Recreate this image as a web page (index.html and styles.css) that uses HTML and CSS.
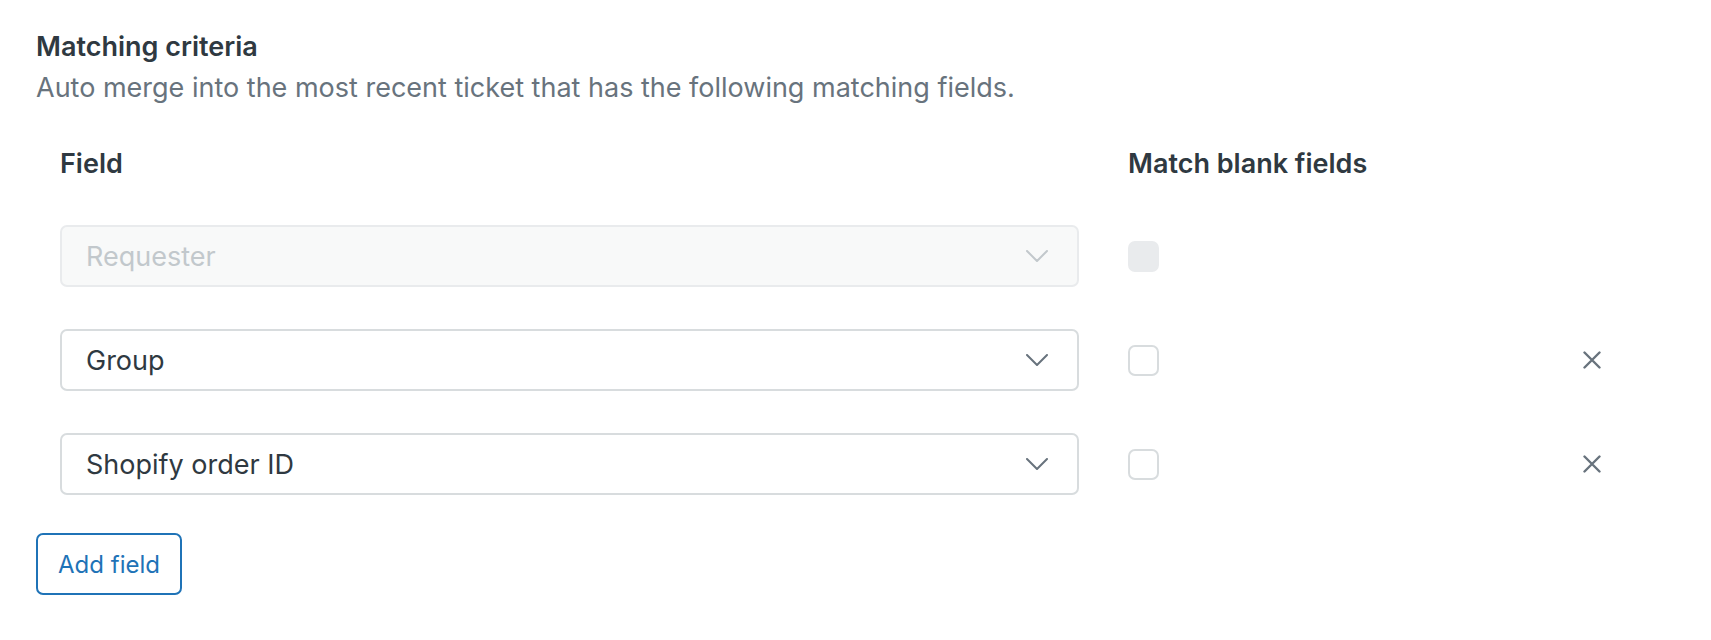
FILE: index.html
```html
<!DOCTYPE html>
<html lang="en">
<head>
<meta charset="utf-8">
<title>Matching criteria</title>
<link rel="stylesheet" href="styles.css">
</head>
<body>
<section class="criteria">
  <h2 class="criteria__title">Matching criteria</h2>
  <p class="criteria__hint">Auto merge into the most recent ticket that has the following matching fields.</p>

  <div class="grid">
    <div class="grid__head">Field</div>
    <div class="grid__head">Match blank fields</div>
    <div class="grid__head"></div>

    <div class="select select--disabled">
      <span class="select__value">Requester</span>
      <svg class="select__chevron" viewBox="0 0 22 12" width="22" height="12"><path d="M1 1l10 10L21 1" fill="none" stroke="currentColor" stroke-width="2" stroke-linecap="round" stroke-linejoin="round"/></svg>
    </div>
    <div class="cell"><span class="checkbox checkbox--disabled"></span></div>
    <div class="cell"></div>

    <div class="select">
      <span class="select__value">Group</span>
      <svg class="select__chevron" viewBox="0 0 22 12" width="22" height="12"><path d="M1 1l10 10L21 1" fill="none" stroke="currentColor" stroke-width="2" stroke-linecap="round" stroke-linejoin="round"/></svg>
    </div>
    <div class="cell"><span class="checkbox"></span></div>
    <div class="cell cell--center"><svg class="remove" viewBox="0 0 18 18" width="18" height="18"><path d="M1.5 1.5l15 15M16.5 1.5l-15 15" fill="none" stroke="currentColor" stroke-width="2.4" stroke-linecap="round"/></svg></div>

    <div class="select">
      <span class="select__value">Shopify order ID</span>
      <svg class="select__chevron" viewBox="0 0 22 12" width="22" height="12"><path d="M1 1l10 10L21 1" fill="none" stroke="currentColor" stroke-width="2" stroke-linecap="round" stroke-linejoin="round"/></svg>
    </div>
    <div class="cell"><span class="checkbox"></span></div>
    <div class="cell cell--center"><svg class="remove" viewBox="0 0 18 18" width="18" height="18"><path d="M1.5 1.5l15 15M16.5 1.5l-15 15" fill="none" stroke="currentColor" stroke-width="2.4" stroke-linecap="round"/></svg></div>
  </div>

  <button class="btn" type="button">Add field</button>
</section>
</body>
</html>
```

FILE: styles.css
```css
html, body {
  margin: 0;
  padding: 0;
  background: #ffffff;
}

body {
  font-family: Inter, "Noto Sans", "Liberation Sans", sans-serif;
  color: #2f3941;
}

.criteria {
  padding: 29px 0 0 36px;
}

.criteria__title {
  margin: 0;
  font-size: 27px;
  line-height: 36px;
  font-weight: 600;
  color: #2f3941;
}

.criteria__hint {
  margin: 5px 0 0;
  font-size: 27px;
  line-height: 36px;
  font-weight: 400;
  color: #68737d;
}

.grid {
  margin: 40px 0 0 24px;
  width: 1550px;
  display: grid;
  grid-template-columns: 1019px 1fr 36px;
  column-gap: 49px;
  row-gap: 42px;
  align-items: center;
}

.grid__head {
  font-size: 27px;
  line-height: 36px;
  font-weight: 600;
  color: #2f3941;
  margin-bottom: 1px;
}

.select {
  box-sizing: border-box;
  height: 62px;
  display: flex;
  align-items: center;
  justify-content: space-between;
  padding: 0 29px 0 24px;
  border: 2px solid #d8dcde;
  border-radius: 7px;
  background: #ffffff;
  color: #2f3941;
  font-size: 27px;
}

.select__chevron {
  color: #68737d;
  display: block;
}

.select--disabled {
  background: #f8f9f9;
  border-color: #e9ebed;
  color: #c2c8cc;
}

.select--disabled .select__chevron {
  color: #c2c8cc;
}

.cell {
  display: flex;
  align-items: center;
}

.cell--center {
  justify-content: center;
}

.checkbox {
  box-sizing: border-box;
  width: 31px;
  height: 31px;
  border: 2px solid #d8dcde;
  border-radius: 7px;
  background: #ffffff;
}

.checkbox--disabled {
  border-color: #e9ebed;
  background: #e9ebed;
}

.remove {
  color: #68737d;
  display: block;
}

.btn {
  margin-top: 38px;
  box-sizing: border-box;
  width: 146px;
  height: 62px;
  border: 2px solid #1f73b7;
  border-radius: 7px;
  background: #ffffff;
  color: #1f73b7;
  font-family: Inter, "Noto Sans", "Liberation Sans", sans-serif;
  font-size: 24px;
  font-weight: 400;
  padding: 0;
  cursor: pointer;
}
```
